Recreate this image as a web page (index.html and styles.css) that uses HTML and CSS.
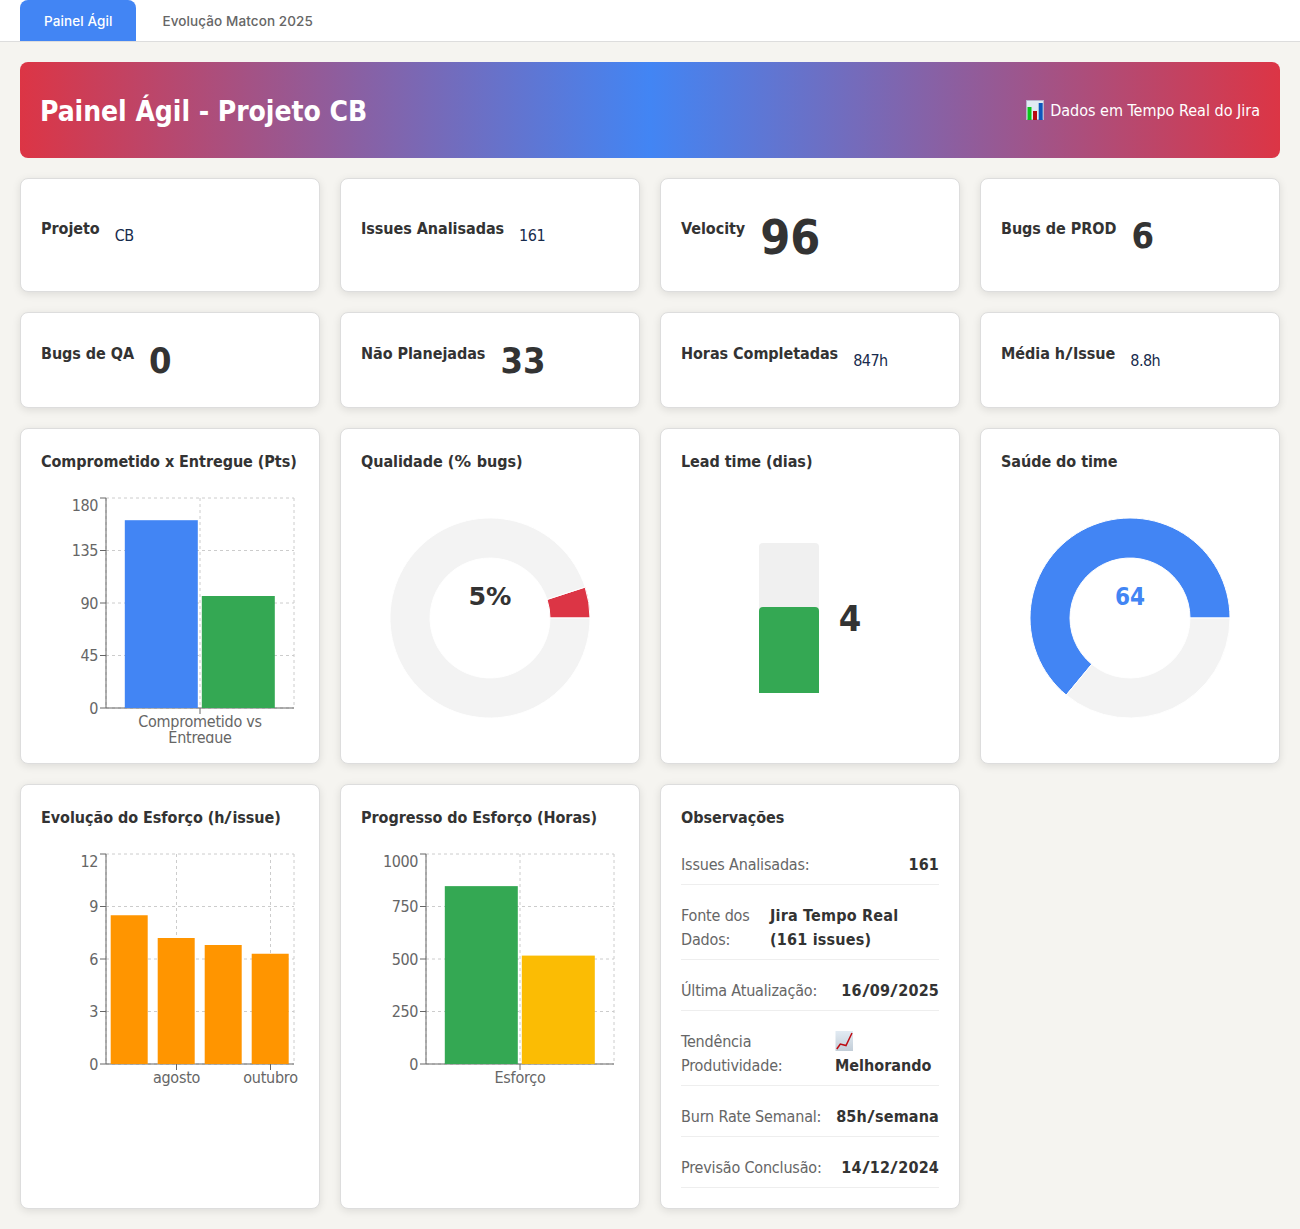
FILE: index.html
```html
<!DOCTYPE html>
<html lang="pt-BR">
<head>
<meta charset="utf-8">
<title>Painel Ágil - Projeto CB</title>
<link rel="stylesheet" href="styles.css">
</head>
<body>
<nav class="tabs">
  <button class="tab active">Painel Ágil</button>
  <button class="tab">Evolução Matcon 2025</button>
</nav>
<main class="page">
  <header class="banner">
    <h1>Painel Ágil - Projeto CB</h1>
    <div class="source">
      <svg width="18" height="20" viewBox="0 0 18 20"><rect width="18" height="20" fill="#b9b3cb"/><rect x="1" y="1" width="16" height="18" fill="#e1eaf2"/><rect x="1.5" y="7" width="4" height="13" fill="#0bc41b"/><rect x="7" y="11" width="4" height="9" fill="#b60a12"/><rect x="12.7" y="3" width="4" height="17" fill="#0c56bd"/></svg>
      <span>Dados em Tempo Real do Jira</span>
    </div>
  </header>
  <div class="grid">
    <section class="card stat"><h3>Projeto</h3><span>CB</span></section>
    <section class="card stat"><h3>Issues Analisadas</h3><span>161</span></section>
    <section class="card stat"><h3>Velocity</h3><strong class="huge">96</strong></section>
    <section class="card stat"><h3>Bugs de PROD</h3><strong class="big">6</strong></section>
    <section class="card stat"><h3>Bugs de QA</h3><strong class="big">0</strong></section>
    <section class="card stat"><h3>Não Planejadas</h3><strong class="big">33</strong></section>
    <section class="card stat"><h3>Horas Completadas</h3><span>847h</span></section>
    <section class="card stat"><h3>Média h<span class="slash">/</span>Issue</h3><span>8.8h</span></section>

    <section class="card"><h3>Comprometido x Entregue (Pts)</h3>
      <svg class="chart" width="258" height="250">
        <path class="gridline" d="M65 5H253M65 57.5H253M65 110H253M65 162.5H253M65 215H253"/>
        <path class="gridline" d="M159 5V215"/><path class="gridline" d="M253 5V215"/><path class="gridline" d="M65 5V215"/>
        <path class="axis" d="M65 215H253M65 5V215M59 5H65M59 57.5H65M59 110H65M59 162.5H65M59 215H65M159 215V221"/>
        <rect x="83.8" y="27.2" width="73" height="187.8" fill="#4285f4"/>
        <rect x="160.8" y="103" width="73" height="112" fill="#34a853"/>
        <g class="ticks-y"><text x="57" y="17.7">180</text><text x="57" y="63.2">135</text><text x="57" y="115.7">90</text><text x="57" y="168.2">45</text><text x="57" y="220.7">0</text></g>
        <g class="ticks-x"><text x="159" y="233.7">Comprometido vs</text><text x="159" y="249.7">Entregue</text></g>
      </svg>
    </section>
    <section class="card"><h3>Qualidade (<span class="percent">%</span> bugs)</h3>
      <svg class="chart" width="258" height="250">
        <g stroke="#fff"><path fill="#dc3545" d="M229 125A100 100 0 0 0 224.11 94.1L186.06 106.46A60 60 0 0 1 189 125Z"/>
        <path fill="#f3f3f3" d="M224.11 94.1A100 100 0 1 0 229 125H189A60 60 0 1 1 186.06 106.46Z"/></g>
        <text class="donut-value" x="129" y="112.3" textLength="43" lengthAdjust="spacingAndGlyphs">5%</text>
      </svg>
    </section>
    <section class="card"><h3>Lead time (dias)</h3>
      <div class="lead"><div class="gauge"><div class="gauge-fill" style="height:57.333%"></div></div><strong class="big">4</strong></div>
    </section>
    <section class="card"><h3>Saúde do time</h3>
      <svg class="chart" width="258" height="250">
        <g stroke="#fff"><path fill="#4285f4" d="M229 125A100 100 0 1 0 65.26 202.05L90.76 171.23A60 60 0 1 1 189 125Z"/>
        <path fill="#f3f3f3" d="M65.26 202.05A100 100 0 0 0 229 125H189A60 60 0 0 1 90.76 171.23Z"/></g>
        <text class="donut-value blue" x="129" y="112.3">64</text>
      </svg>
    </section>

    <section class="card"><h3>Evolução do Esforço (h<span class="slash">/</span>issue)</h3>
      <svg class="chart" width="258" height="250">
        <path class="gridline" d="M65 5H253M65 57.5H253M65 110H253M65 162.5H253M65 215H253"/>
        <path class="gridline" d="M135.5 5V215M229.5 5V215"/><path class="gridline" d="M253 5V215"/><path class="gridline" d="M65 5V215"/>
        <path class="axis" d="M65 215H253M65 5V215M59 5H65M59 57.5H65M59 110H65M59 162.5H65M59 215H65M135.5 215V221M229.5 215V221"/>
        <g fill="#ff9500"><rect x="69.7" y="66.25" width="37" height="148.75"/><rect x="116.7" y="89" width="37" height="126"/><rect x="163.7" y="96" width="37" height="119"/><rect x="210.7" y="104.75" width="37" height="110.25"/></g>
        <g class="ticks-y"><text x="57" y="17.7">12</text><text x="57" y="63.2">9</text><text x="57" y="115.7">6</text><text x="57" y="168.2">3</text><text x="57" y="220.7">0</text></g>
        <g class="ticks-x"><text x="135.5" y="233.7">agosto</text><text x="229.5" y="233.7">outubro</text></g>
      </svg>
    </section>
    <section class="card"><h3>Progresso do Esforço (Horas)</h3>
      <svg class="chart" width="258" height="250">
        <path class="gridline" d="M65 5H253M65 57.5H253M65 110H253M65 162.5H253M65 215H253"/>
        <path class="gridline" d="M159 5V215"/><path class="gridline" d="M253 5V215"/><path class="gridline" d="M65 5V215"/>
        <path class="axis" d="M65 215H253M65 5V215M59 5H65M59 57.5H65M59 110H65M59 162.5H65M59 215H65M159 215V221"/>
        <rect x="83.8" y="37.13" width="73" height="177.87" fill="#34a853"/>
        <rect x="160.8" y="106.6" width="73" height="108.4" fill="#fbbc04"/>
        <g class="ticks-y"><text x="57" y="17.7">1000</text><text x="57" y="63.2">750</text><text x="57" y="115.7">500</text><text x="57" y="168.2">250</text><text x="57" y="220.7">0</text></g>
        <g class="ticks-x"><text x="159" y="233.7">Esforço</text></g>
      </svg>
    </section>
    <section class="card"><h3>Observações</h3>
      <div class="notes">
        <div class="note"><span>Issues Analisadas:</span><strong>161</strong></div>
        <div class="note"><span>Fonte dos<br>Dados:</span><strong class="wide">Jira Tempo Real<br>(161 issues)</strong></div>
        <div class="note"><span>Última Atualização:</span><strong>16<span class="slash">/</span>09<span class="slash">/</span>2025</strong></div>
        <div class="note"><span>Tendência<br>Produtividade:</span><strong class="trend"><svg width="18" height="20" viewBox="0 0 18 20"><defs><linearGradient id="paper" x2="0" y2="1"><stop stop-color="#e2ebf3"/><stop offset="1" stop-color="#c3ced8"/></linearGradient></defs><rect x="0.5" width="17.5" height="20" fill="url(#paper)"/><path d="M1.8 18L5.3 13L11 14.5L17 2" fill="none" stroke="#bd0c13" stroke-width="1.5"/></svg><br>Melhorando</strong></div>
        <div class="note"><span>Burn Rate Semanal:</span><strong>85h<span class="slash">/</span>semana</strong></div>
        <div class="note"><span>Previsão Conclusão:</span><strong>14<span class="slash">/</span>12<span class="slash">/</span>2024</strong></div>
      </div>
    </section>
  </div>
</main>
</body>
</html>
```
FILE: styles.css
```css
* { box-sizing: border-box; }
body {
  margin: 0;
  background: #f5f4f0;
  color: #172b4d;
  font: 16px/24px Tahoma, "DejaVu Sans Condensed", "DejaVu Sans", sans-serif;
  font-stretch: condensed;
}
h1, h3 { margin: 0; }
.tabs {
  display: flex;
  gap: 2px;
  height: 42px;
  padding: 0 20px;
  background: #fff;
  border-bottom: 1px solid #ddd;
}
.tab {
  padding: 0 24px;
  border: 0;
  border-radius: 8px 8px 0 0;
  background: transparent;
  color: #666;
  font: 500 13.5px Inter, sans-serif;
  letter-spacing: 0.1px;
}
.tab.active { background: #4285f4; color: #fff; }
.page { padding: 20px; }
.banner {
  display: flex;
  align-items: center;
  justify-content: space-between;
  height: 96px;
  padding: 0 20px;
  margin-bottom: 20px;
  border-radius: 8px;
  background: linear-gradient(90deg, #dc3545, #4285f4 50%, #dc3545);
  color: #fff;
}
.banner h1 {
  padding-top: 3px;
  font-size: 28px;
  line-height: 42px;
  letter-spacing: -0.05px;
}
.source { display: flex; align-items: center; gap: 6px; }
.source span { padding-top: 2px; }
.grid {
  display: grid;
  grid-template-columns: repeat(4, 1fr);
  gap: 20px;
}
.card {
  min-width: 0;
  padding: 20px;
  border: 1px solid #ddd;
  border-radius: 8px;
  background: #fff;
  box-shadow: 0 2px 8px rgba(0, 0, 0, 0.1);
}
.card h3 {
  margin-bottom: 13px;
  color: #333;
  font-size: 16px;
  line-height: 26px;
  letter-spacing: -0.05px;
  white-space: nowrap;
}
.slash { display: inline-block; padding: 0 1.4px; transform: scaleX(1.4); }
.percent { display: inline-block; padding: 0 1.6px; transform: scaleX(1.15); }
.stat { display: flex; align-items: center; gap: 15px; }
.stat > span { padding-top: 2px; letter-spacing: -0.5px; }
.huge, .big { color: #333; }
.huge { padding-top: 4px; font-size: 48px; line-height: 68px; }
.big { padding-top: 2px; font-size: 36px; line-height: 52px; }
.chart { display: block; margin-top: 18px; overflow: hidden; }
.gridline { fill: none; stroke: #ccc; stroke-dasharray: 3 3; }
.axis { fill: none; stroke: #666; }
.ticks-y, .ticks-x { fill: #666; }
.ticks-y { text-anchor: end; letter-spacing: -0.4px; }
.ticks-x { text-anchor: middle; letter-spacing: -0.25px; }
.donut-value { fill: #333; font-size: 24px; font-weight: 700; text-anchor: middle; }
.donut-value.blue { fill: #4285f4; }
.lead {
  display: flex;
  align-items: center;
  justify-content: center;
  gap: 20px;
  height: 250px;
  margin-top: 18px;
}
.gauge {
  display: flex;
  align-items: flex-end;
  width: 60px;
  height: 150px;
  border-radius: 4px 4px 0 0;
  background: #f0f0f0;
}
.gauge-fill { width: 100%; border-radius: 4px 4px 0 0; background: #34a853; }
.notes { display: flex; flex-direction: column; gap: 10px; }
.note {
  display: flex;
  justify-content: space-between;
  padding: 9px 0 7px;
  border-bottom: 1px solid #eee;
  color: #666;
  white-space: nowrap;
}
.note > span { letter-spacing: -0.18px; }
.note strong { color: #333; }
.note strong:not(.wide):not(.trend) { letter-spacing: 0.15px; }
.note .wide { width: 169px; letter-spacing: 0.2px; }
.note .trend { width: 104px; }
.trend svg { vertical-align: -4px; }
```
